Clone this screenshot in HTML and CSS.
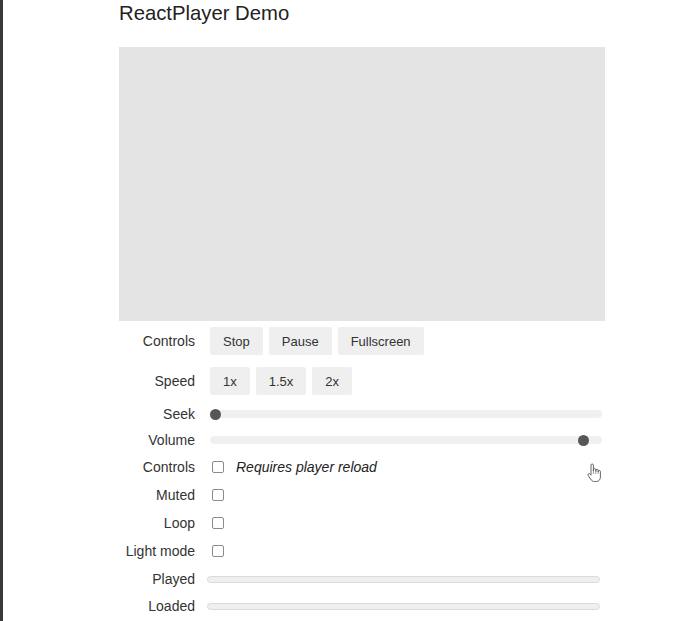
FILE: index.html
```html
<!DOCTYPE html>
<html>
<head>
<meta charset="utf-8">
<title>ReactPlayer Demo</title>
<link rel="stylesheet" href="styles.css">
</head>
<body>
<div class="frame">
  <div class="app">
    <h1 class="title">ReactPlayer Demo</h1>
    <div class="player"></div>
    <div class="table">
      <div class="label row-btn">Controls</div>
      <div class="cell row-btn">
        <button class="btn">Stop</button>
        <button class="btn">Pause</button>
        <button class="btn">Fullscreen</button>
      </div>

      <div class="label row-btn">Speed</div>
      <div class="cell row-btn">
        <button class="btn">1x</button>
        <button class="btn">1.5x</button>
        <button class="btn">2x</button>
      </div>

      <div class="label row-s">Seek</div>
      <div class="cell row-s"><input class="slider" type="range" min="0" max="1" step="any" value="0"></div>

      <div class="label row-s">Volume</div>
      <div class="cell row-s"><input class="slider" type="range" min="0" max="1" step="any" value="0.967"></div>

      <div class="label row-m">Controls</div>
      <div class="cell row-m"><input class="check" type="checkbox"><em class="note">Requires player reload</em></div>

      <div class="label row-m">Muted</div>
      <div class="cell row-m"><input class="check" type="checkbox"></div>

      <div class="label row-m">Loop</div>
      <div class="cell row-m"><input class="check" type="checkbox"></div>

      <div class="label row-m">Light mode</div>
      <div class="cell row-m"><input class="check" type="checkbox"></div>

      <div class="label row-m">Played</div>
      <div class="cell row-m"><div class="progress"></div></div>

      <div class="label row-s">Loaded</div>
      <div class="cell row-s"><div class="progress"></div></div>
    </div>
  </div>
  <svg class="cursor" width="14" height="20" viewBox="0 0 14 20" aria-hidden="true">
    <path d="M4 10.5 V2.2 a1.2 1.2 0 0 1 2.4 0 V8 V6.8 a1.2 1.2 0 0 1 2.4 0 V8.5 V7.6 a1.2 1.2 0 0 1 2.4 0 V9 V8.6 a1.1 1.1 0 0 1 2.2 0 V14 c0 2.5 -1.5 4.5 -4 4.5 H7.5 c-2 0 -3 -1 -4 -2.5 L1.2 12.4 a1.1 1.1 0 0 1 1.8 -1.3 L4 12.2 Z" fill="#fff" stroke="#555" stroke-width="0.9" stroke-linejoin="round"/>
    <path d="M6.4 8 V11 M8.8 8.5 V11 M11.2 9 V11" stroke="#777" stroke-width="0.7" fill="none"/>
  </svg>
</div>
</body>
</html>
```

FILE: styles.css
```css
html, body {
  margin: 0;
  padding: 0;
  background: #fff;
}

body {
  font-family: "Liberation Sans", Arial, sans-serif;
  color: #333;
}

.frame {
  position: relative;
  min-height: 621px;
  border-left: 3px solid #3a3a3a;
  box-sizing: border-box;
}

.app {
  margin-left: 116px;
  width: 486px;
}

.title {
  margin: 0 0 22px;
  padding-top: 2px;
  font-size: 20.3px;
  font-weight: normal;
  line-height: 23px;
  color: #222;
}

.player {
  height: 274px;
  background: #e4e4e4;
}

.table {
  display: grid;
  grid-template-columns: 76px 395px;
  column-gap: 15px;
  font-size: 14px;
}

.label {
  display: flex;
  align-items: center;
  justify-content: flex-end;
  white-space: nowrap;
  color: #333;
}

.cell {
  display: flex;
  align-items: center;
  gap: 6px;
}

.row-btn { height: 40px; }
.row-s { height: 26px; }
.row-m { height: 28px; }

.btn {
  height: 28px;
  padding: 0 13px;
  border: none;
  border-radius: 2px;
  background: #efefef;
  color: #333;
  font-family: "Liberation Sans", Arial, sans-serif;
  font-size: 13px;
}

.slider {
  -webkit-appearance: none;
  appearance: none;
  width: 392px;
  height: 8px;
  margin: 0;
  border-radius: 4px;
  background: #f0f0f0;
}

.slider::-webkit-slider-thumb {
  -webkit-appearance: none;
  appearance: none;
  width: 11px;
  height: 11px;
  border-radius: 50%;
  background: #575757;
}

.check {
  -webkit-appearance: none;
  appearance: none;
  width: 12px;
  height: 12px;
  margin: 0 0 0 2px;
  border: 1px solid #8a8a8a;
  border-radius: 2px;
  background: #fff;
  box-sizing: border-box;
}

.note {
  margin-left: 6px;
  font-style: italic;
  color: #222;
}

.progress {
  width: 393px;
  height: 7px;
  margin-left: -3px;
  box-sizing: border-box;
  border: 1px solid #dadada;
  border-radius: 4px;
  background: #efefef;
}

.cursor {
  position: absolute;
  left: 584px;
  top: 463px;
}
```
